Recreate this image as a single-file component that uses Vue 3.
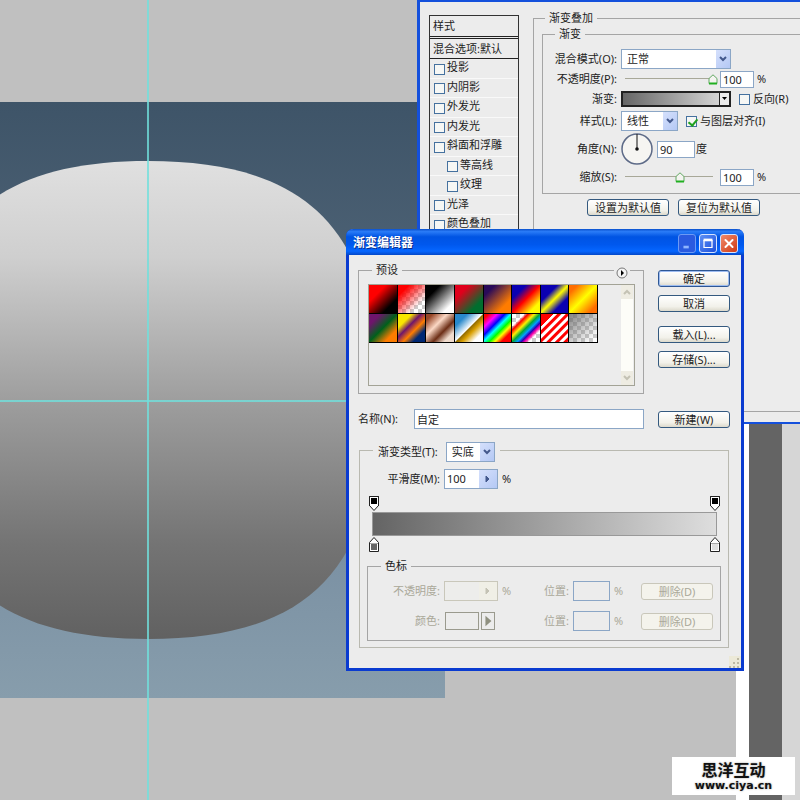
<script setup>
import { ref } from 'vue'

const effects = ref([
  { id: 'shadow', label: '投影' },
  { id: 'inner-shadow', label: '内阴影' },
  { id: 'outer-glow', label: '外发光' },
  { id: 'inner-glow', label: '内发光' },
  { id: 'bevel', label: '斜面和浮雕' },
  { id: 'contour', label: '等高线', nested: true },
  { id: 'texture', label: '纹理', nested: true },
  { id: 'satin', label: '光泽' },
  { id: 'color-overlay', label: '颜色叠加' },
])

const checker = 'repeating-conic-gradient(#ccc 0 25%, #fff 0 50%) 0 0 / 8px 8px'
const presets = [
  'linear-gradient(135deg, #f00 30%, #000 75%)',
  `linear-gradient(135deg, #f00 20%, rgba(255,0,0,0) 75%), ${checker}`,
  'linear-gradient(135deg, #000 25%, #fff 80%)',
  'linear-gradient(135deg, #e0001c 25%, #006e2e 75%)',
  'linear-gradient(135deg, #290a59 20%, #ff7c00 75%)',
  'linear-gradient(135deg, #0a00b2 25%, #f00 50%, #fffc00 80%)',
  'linear-gradient(135deg, #0a00b2 30%, #fffc00 50%, #0a00b2 72%)',
  'linear-gradient(135deg, #ff6e00 15%, #ff0 50%, #ff6e00 85%)',
  'linear-gradient(135deg, #6f156c 20%, #00601b 50%, #fd7c00 78%)',
  'linear-gradient(135deg, #f9e600 25%, #6f156c 42%, #fd7c00 60%, #002874 78%)',
  'linear-gradient(135deg, #974627 12%, #fbd8c5 38%, #6c2e16 62%, #efdbcd 82%)',
  'linear-gradient(135deg, #2989cc 22%, #fff 49%, #906a00 51%, #d99f00 62%, #fff 82%)',
  'linear-gradient(135deg, #f00 8%, #f0f 24%, #00f 38%, #0ff 49%, #0f0 60%, #ff0 70%, #f00 82%)',
  `linear-gradient(135deg, transparent 22%, #f00 29%, #fff200 40%, #00a83c 50%, #00a0ff 59%, #2a00b8 66%, #f0a 72%, transparent 80%), ${checker}`,
  `linear-gradient(135deg, #f00 22%, transparent 22%), repeating-linear-gradient(135deg, #f00 0 2px, #fff 3px 5px, #f00 6px), ${checker}`,
  `linear-gradient(135deg, rgba(100,100,100,.8), rgba(120,120,120,.5) 40%, transparent 90%), ${checker}`,
]

const stopRows = [
  { id: 'stop-opacity', label: '不透明度:', kind: 'combo' },
  { id: 'stop-color', label: '颜色:', kind: 'color' },
]

const opacity = ref(100)
const scale = ref(60)
const aligned = ref(true)
</script>

<template>
  <main class="desktop">
    <section class="artboard" aria-label="画布">
      <svg class="shape" viewBox="0 0 445 596" aria-hidden="true">
        <defs>
          <linearGradient id="body-fill" x1="0" y1="0" x2="0" y2="1">
            <stop offset="0" stop-color="#e0e0e0" />
            <stop offset=".2" stop-color="#cfcfcf" />
            <stop offset=".5" stop-color="#9e9e9e" />
            <stop offset=".8" stop-color="#747474" />
            <stop offset="1" stop-color="#616161" />
          </linearGradient>
        </defs>
        <path
          fill="url(#body-fill)"
          d="M148 59C308 59 378 128 378 298S308 537 148 537S-84 468 -84 298S-12 59 148 59Z"
        />
      </svg>
    </section>
    <div class="guide guide-v"></div>
    <div class="guide guide-h"></div>
    <div class="dock"><i class="dock-edge"></i><i class="dock-gap"></i><i class="dock-panel"></i></div>

    <section class="window layer-style">
      <div class="style-list">
        <h2 class="list-head">样式</h2>
        <h3 class="list-sub">混合选项:默认</h3>
        <ul class="effects">
          <li v-for="e in effects" :key="e.id" :class="{ nested: e.nested }">
            <input :id="e.id" class="check" type="checkbox" />
            <label :for="e.id">{{ e.label }}</label>
          </li>
        </ul>
      </div>

      <fieldset class="overlay">
        <legend>渐变叠加</legend>
        <fieldset class="gradient-group">
          <legend>渐变</legend>
          <div class="row">
            <label class="name" for="mode">混合模式(O):</label>
            <span class="combo w110">
              <select id="mode"><option>正常</option></select>
              <span class="drop"><svg viewBox="0 0 14 18"><path d="M4 7l3 3 3-3" /></svg></span>
            </span>
          </div>
          <div class="row">
            <label class="name" for="opacity">不透明度(P):</label>
            <input id="opacity" v-model="opacity" class="slider" type="range" />
            <input class="field w34" type="text" value="100" aria-label="不透明度数值" />
            <span>%</span>
          </div>
          <div class="row">
            <label class="name" for="ramp">渐变:</label>
            <button id="ramp" class="ramp" type="button">
              <span class="ramp-fill"></span>
              <svg class="ramp-arrow" viewBox="0 0 9 11"><path d="M2 4h5L4.500 7z" /></svg>
            </button>
            <span class="tick">
              <input id="reverse" class="check" type="checkbox" />
              <label for="reverse">反向(R)</label>
            </span>
          </div>
          <div class="row tall">
            <label class="name" for="style">样式(L):</label>
            <span class="combo w57">
              <select id="style"><option>线性</option></select>
              <span class="drop"><svg viewBox="0 0 14 18"><path d="M4 7l3 3 3-3" /></svg></span>
            </span>
            <span class="tick">
              <input id="align" v-model="aligned" class="check" type="checkbox" />
              <label for="align">与图层对齐(I)</label>
            </span>
          </div>
          <div class="row dial-row">
            <label class="name" for="angle">角度(N):</label>
            <svg class="dial" viewBox="0 0 32 32" aria-hidden="true">
              <circle cx="16" cy="16" r="15" fill="#f6f5f2" stroke="#5d6a87" stroke-width="1.500" />
              <path d="M16 1V16" stroke="#111" />
              <circle cx="16" cy="16" r="1.800" fill="#111" />
            </svg>
            <input id="angle" class="field w38" type="text" value="90" />
            <span class="unit">度</span>
          </div>
          <div class="row tall">
            <label class="name" for="scale">缩放(S):</label>
            <input id="scale" v-model="scale" class="slider" type="range" />
            <input class="field w34" type="text" value="100" aria-label="缩放数值" />
            <span>%</span>
          </div>
        </fieldset>
        <div class="defaults">
          <button class="btn" type="button">设置为默认值</button>
          <button class="btn" type="button">复位为默认值</button>
        </div>
      </fieldset>
    </section>

    <section class="window editor">
      <header class="title">
        <h1>渐变编辑器</h1>
        <button class="cap cap-min" type="button" aria-label="最小化">
          <svg viewBox="0 0 18 18"><path d="M5 13h6" stroke="#8fb4ff" stroke-width="3" /></svg>
        </button>
        <button class="cap cap-max" type="button" aria-label="最大化">
          <svg viewBox="0 0 18 18"><path d="M4 5h10" stroke="#fff" stroke-width="3" /><path d="M4.500 5v8.500h9V5" stroke="#fff" fill="none" stroke-width="1.400" /></svg>
        </button>
        <button class="cap cap-close" type="button" aria-label="关闭">
          <svg viewBox="0 0 18 18"><path d="M5 5l8 8M13 5l-8 8" stroke="#fff" stroke-width="2.200" stroke-linecap="round" /></svg>
        </button>
      </header>

      <div class="content">
        <div class="top">
          <fieldset class="presets">
            <legend>预设</legend>
            <button class="flyout" type="button" aria-label="预设菜单">
              <svg viewBox="0 0 12 12"><circle cx="6" cy="6" r="5" fill="#f4f4f4" stroke="#777" /><path d="M5 3l3 3-3 3z" fill="#000" /></svg>
            </button>
            <div class="preset-box">
              <div class="swatches">
                <span v-for="(p, i) in presets" :key="i" class="swatch" :style="{ background: p }"></span>
              </div>
              <div class="scroll">
                <svg viewBox="0 0 12 14"><path d="M3 9l3-3 3 3" /></svg>
                <svg viewBox="0 0 12 14"><path d="M3 5l3 3 3-3" /></svg>
              </div>
            </div>
          </fieldset>
          <div class="actions">
            <button class="btn primary" type="button">确定</button>
            <button class="btn" type="button">取消</button>
            <button class="btn spaced" type="button">载入(L)...</button>
            <button class="btn" type="button">存储(S)...</button>
          </div>
        </div>

        <div class="name-row">
          <label for="name">名称(N):</label>
          <input id="name" class="field" type="text" value="自定" />
          <button class="btn" type="button">新建(W)</button>
        </div>

        <fieldset class="type">
          <legend>
            <label for="type">渐变类型(T):</label>
            <span class="combo w49">
              <select id="type"><option>实底</option></select>
              <span class="drop"><svg viewBox="0 0 14 18"><path d="M4 7l3 3 3-3" /></svg></span>
            </span>
          </legend>
          <div class="smooth">
            <label for="smooth">平滑度(M):</label>
            <span class="combo w54">
              <input id="smooth" type="text" value="100" />
              <span class="drop wide"><svg viewBox="0 0 14 18"><path class="solid" d="M6 6l3 3-3 3z" /></svg></span>
            </span>
            <span>%</span>
          </div>
          <div class="stops">
            <svg v-for="n in 2" :key="n" viewBox="0 0 10 15"><path d="M.5.500h9v9L5 14.500.5 9.500z" fill="#fff" stroke="#222" /><path d="M.5 10V.5h9V10" fill="none" stroke="#222" /><path d="M2 2h6v6H2z" fill="#000" /></svg>
          </div>
          <div class="bar"></div>
          <div class="stops">
            <svg v-for="c in ['#666', '#e0e0e0']" :key="c" viewBox="0 0 10 15"><path d="M.5 5.500L5 .5l4.500 5v9H.5z" fill="#fff" stroke="#222" /><path d="M2 7h6v6H2z" :fill="c" /><path d="M1 6.500h8" stroke="#aaa" /></svg>
          </div>

          <fieldset class="stop-group">
            <legend>色标</legend>
            <div v-for="r in stopRows" :key="r.id" class="stop-row">
              <label class="name" :for="r.id">{{ r.label }}</label>
              <span v-if="r.kind === 'combo'" class="combo off">
                <input :id="r.id" type="text" disabled />
                <span class="drop wide"><svg viewBox="0 0 14 18"><path class="solid" d="M6 6l3 3-3 3z" /></svg></span>
              </span>
              <span v-else class="color-pick">
                <button :id="r.id" class="well" type="button" disabled></button>
                <button class="well-menu" type="button" disabled aria-label="颜色菜单">
                  <svg viewBox="0 0 14 18"><path d="M4 3l7 6-7 6z" fill="#8f9080" /></svg>
                </button>
              </span>
              <span>{{ r.kind === 'combo' ? '%' : '' }}</span>
              <label :for="r.id + '-pos'">位置:</label>
              <input :id="r.id + '-pos'" class="field off-field" type="text" disabled />
              <span>%</span>
              <button class="btn off-btn" type="button" disabled>删除(D)</button>
            </div>
          </fieldset>
        </fieldset>
        <svg class="grip" viewBox="0 0 12 12" aria-hidden="true">
          <path d="M8 2h2v2H8zM4 6h2v2H4zM8 6h2v2H8zM0 10h2v2H0zM4 10h2v2H4zM8 10h2v2H8z" fill="#bdb9a4" />
        </svg>
      </div>
    </section>

    <aside class="credit">
      <strong>思洋互动</strong>
      <span>www.ciya.cn</span>
    </aside>
  </main>
</template>

<style>
body {
  margin: 0;
}
</style>

<style scoped>
* {
  box-sizing: border-box;
}
.desktop {
  position: relative;
  min-height: 100vh;
  overflow: hidden;
  background: #c0c0c0;
  color: #1c1c1c;
  font: 11px/16px "Noto Sans", "Noto Sans CJK SC", sans-serif;
  white-space: nowrap;
}
button,
input,
select {
  margin: 0;
  padding: 0;
  font: inherit;
  color: inherit;
}
svg {
  display: block;
}
fieldset {
  min-width: 0;
  margin: 0;
  padding: 0;
  border: 1px solid #a5a5a5;
}
legend {
  height: 16px;
  padding: 0 4px;
}

/* Canvas */
.artboard {
  position: absolute;
  left: 0;
  top: 102px;
  width: 445px;
  height: 596px;
  background: linear-gradient(#3e5468, #4b6073 25%, #7c92a4 78%, #879dac);
}
.shape {
  width: 100%;
  height: 100%;
}
.guide {
  position: absolute;
  background: #70e0dc;
}
.guide-v {
  left: 147px;
  top: 0;
  bottom: 0;
  width: 2px;
  opacity: .8;
}
.guide-h {
  left: 0;
  top: 400px;
  width: 400px;
  height: 2px;
  opacity: .8;
}
.dock {
  position: absolute;
  top: 0;
  right: 0;
  bottom: 0;
  display: flex;
}
.dock-edge {
  width: 13px;
  background: #fff;
}
.dock-gap {
  width: 33px;
  background: #646464;
}
.dock-panel {
  width: 18px;
  background: #d6d6d6;
}

/* Shared controls */
.window {
  position: absolute;
  background: #ececec;
}
.combo {
  display: flex;
  height: 20px;
  border: 1px solid #8ba6c6;
  background: #fff;
}
.combo select,
.combo input {
  flex: 1;
  min-width: 0;
  border: 0;
  outline: 0;
  appearance: none;
  background: transparent;
}
.combo select {
  padding-left: 5px;
}
.combo input {
  padding-left: 2px;
}
.drop {
  width: 14px;
  flex: none;
  background: linear-gradient(135deg, #d5e0fc, #b4c8f4);
}
.drop svg {
  width: 14px;
  height: 18px;
}
.drop path {
  fill: none;
  stroke: #43588c;
  stroke-width: 2;
}
.drop .solid {
  fill: #43588c;
  stroke: #43588c;
  stroke-width: 1;
}
.drop.wide {
  width: 18px;
  padding-left: 1px;
}
.w110 { width: 110px; }
.w57 { width: 57px; }
.w54 { width: 54px; }
.w49 { width: 49px; }
.w38 { width: 38px; }
.w34 { width: 34px; }
.field {
  height: 17px;
  padding: 0 2px;
  border: 1px solid #8ba6c6;
  outline: 0;
  background: #fff;
}
.check {
  position: relative;
  width: 11px;
  height: 11px;
  flex: none;
  appearance: none;
  border: 1px solid #45719f;
  background: #f6f7f5;
}
.check:checked::after {
  content: "";
  position: absolute;
  left: 3px;
  top: 0;
  width: 4px;
  height: 7px;
  border: solid #21a121;
  border-width: 0 2px 2px 0;
  transform: rotate(40deg);
}
.btn {
  height: 17px;
  border: 1px solid #34597f;
  border-radius: 3px;
  background: linear-gradient(#fff, #f2f1ea 70%, #dcd9cc);
  line-height: 15px;
}
.btn.primary {
  border-color: #2e5795;
  box-shadow: inset 0 0 0 1px #9dbcf0;
}

/* Layer style window */
.layer-style {
  left: 417px;
  top: 0;
  right: 0;
  height: 424px;
  display: flex;
  gap: 14px;
  padding: 8px 0 10px 9px;
  border: solid #1450dc;
  border-width: 2px 0 2px 3px;
}
.style-list {
  width: 90px;
  margin-top: 5px;
  border: 1px solid #333;
}
.list-head,
.list-sub {
  margin: 0;
  padding-left: 3px;
  font-size: 11px;
  font-weight: 400;
  line-height: 20px;
}
.list-head {
  height: 23px;
  border-bottom: 3px double #222;
}
.list-sub {
  height: 20px;
  line-height: 19px;
  border-bottom: 1px solid #222;
}
.effects {
  display: grid;
  grid-auto-rows: 1fr;
  height: 176px;
  margin: 0;
  padding: 0;
  list-style: none;
}
.effects li {
  display: flex;
  gap: 2px;
  padding: 1px 0 3px 4px;
  border-bottom: 1px solid #f9f9f9;
  line-height: 14px;
}
.effects .check {
  align-self: flex-end;
}
.effects .nested {
  padding-left: 17px;
}
.overlay {
  flex: 1;
  border-right: 0;
  padding-left: 8px;
}
.overlay > legend {
  margin-left: 3px;
}
.gradient-group {
  border-right: 0;
  padding: 7px 0 4px;
}
.gradient-group > legend {
  margin-left: 12px;
}
.row {
  display: flex;
  align-items: center;
  height: 20px;
}
.row .name {
  width: 78px;
  padding-right: 4px;
  text-align: right;
}
.row.tall {
  height: 24px;
}
.row.dial-row {
  height: 32px;
}
.row .field {
  margin-right: 3px;
}
.tick {
  display: flex;
  align-items: center;
  gap: 3px;
  margin-left: 8px;
}
.slider {
  width: 93px;
  height: 14px;
  margin: 0 2px 0 4px;
  appearance: none;
  background: linear-gradient(#a8a898, #a8a898) 0 6px / 88px 1px no-repeat;
}
.slider::-webkit-slider-thumb {
  appearance: none;
  width: 10px;
  height: 11px;
  background: url("data:image/svg+xml,%3Csvg xmlns='http://www.w3.org/2000/svg' viewBox='0 0 10 11'%3E%3Cpath d='M1 4.500L5 .8l4 3.700v5H1z' fill='%23f4f4f0' stroke='%2362a862'/%3E%3Cpath d='M1 9.500h8' stroke='%2321b021' stroke-width='2'/%3E%3C/svg%3E");
}
.ramp {
  display: flex;
  width: 110px;
  height: 16px;
  border: 2px solid #222;
  background: #ececec;
}
.ramp-fill {
  flex: 1;
  height: 100%;
  border-right: 1px solid #222;
  background: linear-gradient(90deg, #666, #d4d4d4);
}
.ramp-arrow {
  width: 9px;
  height: 11px;
}
.dial {
  width: 32px;
  height: 32px;
  margin-right: 4px;
}
.row .w38 {
  margin-right: 1px;
}
.defaults {
  display: flex;
  gap: 9px;
  margin: 5px 0 0 45px;
}
.defaults .btn {
  width: 82px;
}

/* Gradient editor window */
.editor {
  left: 346px;
  top: 229px;
  width: 398px;
  border: solid #0a3bd0;
  border-width: 0 3px 3px;
  border-radius: 7px 7px 0 0;
}
.title {
  display: flex;
  align-items: center;
  gap: 3px;
  height: 26px;
  margin: 0 -3px;
  padding: 2px 6px 0 7px;
  border-radius: 7px 7px 0 0;
  background: linear-gradient(#0a50cc, #2a7cf8 10%, #0054e3 30%, #0058ee 60%, #0566ff 85%, #0347c8);
}
.title h1 {
  flex: 1;
  margin: 0;
  color: #fff;
  font-size: 12px;
  line-height: 18px;
  text-shadow: 1px 1px #0a2c8c;
}
.cap {
  width: 18px;
  height: 19px;
  border: 1px solid #d6e4ff;
  border-radius: 3px;
  background: linear-gradient(135deg, #5d90f5, #1c50dc);
}
.cap svg {
  width: 16px;
  height: 17px;
}
.cap-min {
  border-color: #6c9af5;
  background: #2a5ae0;
}
.cap-close {
  background: linear-gradient(135deg, #f08a6c, #d03a14);
}
.content {
  position: relative;
  padding: 7px 11px 20px 9px;
}
.top {
  display: flex;
  gap: 14px;
}
.presets {
  position: relative;
  flex: 1;
  padding: 6px 8px 7px 9px;
}
.presets > legend {
  margin-left: 4px;
}
.flyout {
  position: absolute;
  right: 13px;
  top: -11px;
  width: 16px;
  height: 12px;
  padding: 0 2px;
  border: 0;
  background: #ececec;
}
.flyout svg {
  width: 12px;
  height: 12px;
}
.preset-box {
  display: flex;
  justify-content: space-between;
  height: 102px;
  border: 1px solid #a3a396;
}
.swatches {
  display: grid;
  grid-template-columns: repeat(8, 1fr);
  grid-auto-rows: 29px;
  align-self: flex-start;
  width: 229px;
}
.swatch {
  border: solid #000;
  border-width: 0 1px 1px 0;
}
.scroll {
  display: flex;
  flex-direction: column;
  justify-content: space-between;
  width: 12px;
  margin-right: 1px;
  background: #fdfdf8;
}
.scroll svg {
  width: 12px;
  height: 14px;
  background: #eeece2;
}
.scroll path {
  fill: none;
  stroke: #c4c2b4;
  stroke-width: 2;
}
.actions {
  display: flex;
  flex-direction: column;
  gap: 8px;
  width: 72px;
  padding-top: 8px;
}
.actions .spaced {
  margin-top: 6px;
}
.name-row {
  display: flex;
  align-items: center;
  margin-top: 15px;
}
.name-row label {
  width: 56px;
}
.name-row .field {
  flex: 1;
  height: 20px;
  margin-right: 14px;
}
.name-row .btn {
  width: 72px;
}
.type {
  margin: 13px 1px 0;
  padding: 11px 7px 6px;
  border-color: #b9b9b0;
}
.type > legend {
  display: flex;
  gap: 8px;
  margin-left: 6px;
  padding: 0 5px;
}
.type > legend label {
  line-height: 20px;
}
.smooth {
  display: flex;
  align-items: center;
  gap: 4px;
}
.smooth label {
  width: 73px;
  text-align: right;
}
.stops {
  display: flex;
  justify-content: space-between;
  margin: 0 1px 0 2px;
}
.smooth + .stops {
  margin-top: 7px;
}
.stops svg {
  width: 10px;
  height: 15px;
}
.bar {
  height: 24px;
  margin: 1px 4px 1px 5px;
  border: 1px solid #999;
  background: linear-gradient(90deg, #646464, #dedede);
}
.stop-group {
  margin-top: 6px;
  padding: 7px 7px 9px 0;
}
.stop-group > legend {
  margin-left: 13px;
}
.stop-row {
  display: grid;
  grid-template-columns: 72px 54px 1fr auto 37px 23px 72px;
  column-gap: 4px;
  align-items: center;
  height: 20px;
  color: #aaa899;
}
.stop-row + .stop-row {
  margin-top: 10px;
}
.stop-row .name {
  text-align: right;
}
.combo.off {
  border-color: #c9c7ba;
  background: #ededeb;
}
.off .drop {
  background: #f0efe6;
}
.off .solid {
  fill: #c4c2b4;
  stroke: #c4c2b4;
}
.off-field {
  min-width: 0;
  height: 20px;
  background: #ececec;
}
.off-btn {
  border-color: #c9c7ba;
  background: #f4f3ec;
}
.color-pick {
  display: flex;
  gap: 2px;
  padding-left: 1px;
}
.well,
.well-menu {
  width: 34px;
  height: 18px;
  border: 1px solid #9a9a8e;
  background: #ececec;
}
.well-menu {
  width: 14px;
}
.well-menu svg {
  width: 12px;
  height: 16px;
}
.grip {
  position: absolute;
  right: 0;
  bottom: 0;
  width: 12px;
  height: 12px;
  background: #ece9d8;
}

/* Credit badge */
.credit {
  position: absolute;
  right: 5px;
  bottom: 5px;
  display: flex;
  flex-direction: column;
  align-items: center;
  gap: 1px;
  width: 123px;
  height: 38px;
  padding-top: 4px;
  background: #fff;
  color: #111;
  text-shadow: 0 0 2px #999;
}
.credit strong {
  font-size: 16px;
  line-height: 18px;
}
.credit span {
  font: bold 11px/12px "DejaVu Sans", sans-serif;
}
</style>
